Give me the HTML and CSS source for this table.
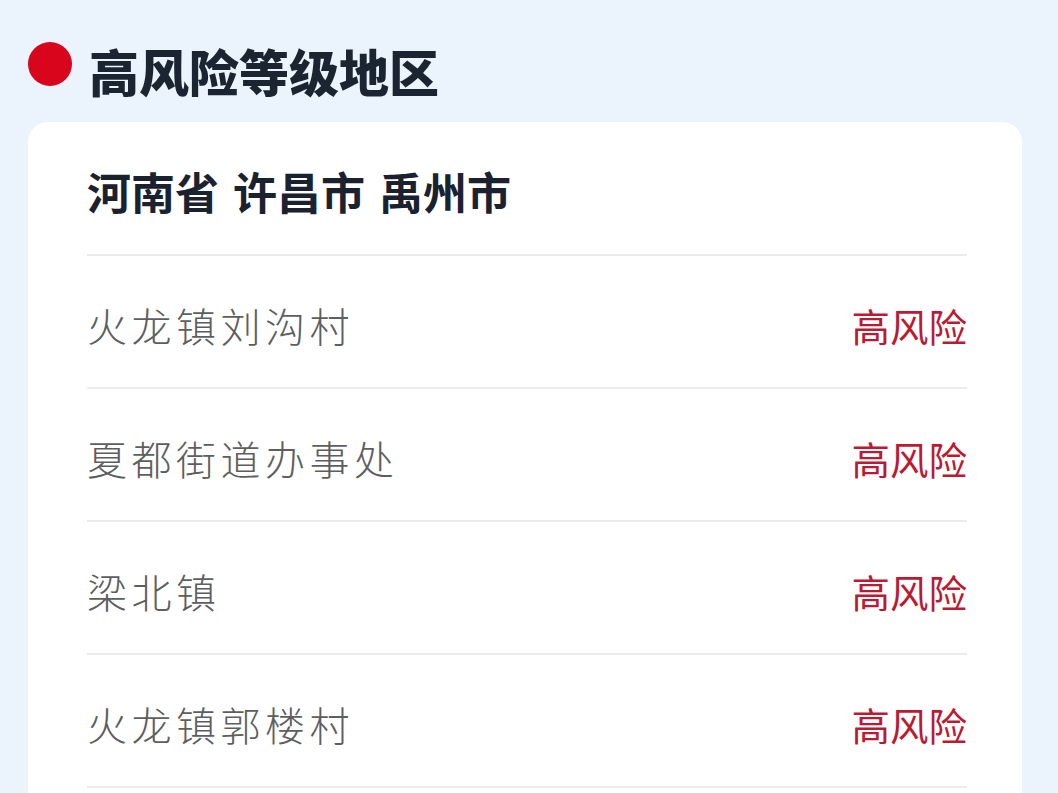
FILE: index.html
```html
<!DOCTYPE html>
<html lang="zh-CN">
<head>
<meta charset="utf-8">
<title>高风险等级地区</title>
<link rel="stylesheet" href="styles.css">
</head>
<body>
<div class="page">
  <div class="title-row">
    <span class="dot"></span>
    <h1 class="title">高风险等级地区</h1>
  </div>
  <div class="card">
    <div class="card-head">河南省 许昌市 禹州市</div>
    <div class="row"><span class="name">火龙镇刘沟村</span><span class="level">高风险</span></div>
    <div class="row"><span class="name">夏都街道办事处</span><span class="level">高风险</span></div>
    <div class="row"><span class="name">梁北镇</span><span class="level">高风险</span></div>
    <div class="row"><span class="name">火龙镇郭楼村</span><span class="level">高风险</span></div>
  </div>
</div>
</body>
</html>
```

FILE: styles.css
```css
html, body {
  margin: 0;
  padding: 0;
  background: #ebf4fc;
}
body {
  font-family: "Noto Sans CJK SC", "Noto Sans", sans-serif;
}
.page {
  padding: 40px 36px 0 28px;
}
.title-row {
  display: flex;
  align-items: flex-start;
  gap: 17px;
  height: 60px;
}
.dot {
  width: 44px;
  height: 44px;
  margin-top: 2px;
  border-radius: 50%;
  background: #d9051c;
  flex: none;
}
.title {
  margin: 0;
  font-size: 50px;
  line-height: 60px;
  font-weight: 900;
  color: #1b2532;
}
.card {
  margin-top: 22px;
  background: #ffffff;
  border-radius: 20px 20px 0 0;
  padding: 0 55px 5px 59px;
}
.card-head {
  padding: 39px 0 33px;
  font-size: 44px;
  line-height: 60px;
  font-weight: 700;
  color: #1a2230;
  word-spacing: 4px;
  border-bottom: 2px solid #ebebeb;
}
.row {
  display: flex;
  justify-content: space-between;
  align-items: center;
  padding: 39px 0 32px;
  line-height: 60px;
  border-bottom: 2px solid #ebebeb;
}
.name {
  font-size: 40px;
  font-weight: 300;
  letter-spacing: 4.5px;
  color: #5d5e60;
}
.level {
  font-size: 38.5px;
  color: #bb1a33;
}
```
